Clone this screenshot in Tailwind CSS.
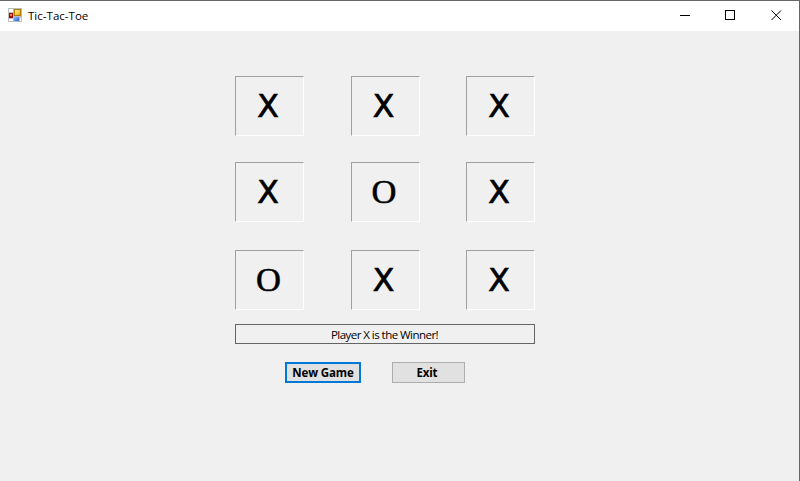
<!DOCTYPE html>
<html lang="en">
<head>
<meta charset="utf-8">
<title>Tic-Tac-Toe</title>
<script src="https://cdn.jsdelivr.net/npm/@tailwindcss/browser@4"></script>
</head>
<body class="w-[800px] h-[481px] overflow-hidden bg-[#f0f0f0] text-black font-['Open_Sans',sans-serif]">
<div class="flex flex-col w-[800px] h-[481px] border-t border-r border-[#66666a]">
  <header class="flex h-[30px] shrink-0 bg-white">
    <svg class="ml-2 mt-[7px] shrink-0" width="14" height="14" shape-rendering="crispEdges">
      <defs>
        <linearGradient id="y" x2="1" y2="1"><stop stop-color="#fff3a0"/><stop offset="1" stop-color="#e8a800"/></linearGradient>
        <linearGradient id="b" x2="1" y2="1"><stop stop-color="#8fbcff"/><stop offset="1" stop-color="#2b62d0"/></linearGradient>
      </defs>
      <rect width="14" height="14" fill="#bdbdbd"/>
      <path fill="#fff" d="M1 1h4v3H1zM1 11h4v2H1zM12 10h1v3h-1z"/>
      <rect x="1" y="5" width="4" height="5" fill="#a80c0c"/><rect x="2" y="6" width="2" height="2" fill="#e87860"/>
      <rect x="6" y="1" width="7" height="7" fill="#b07800"/><rect x="7" y="2" width="5" height="5" fill="url(#y)"/>
      <rect x="6" y="9" width="5" height="4" fill="url(#b)"/>
    </svg>
    <h1 class="ml-1.5 mt-[7px] text-[11.5px] leading-4 tracking-[0.02px] whitespace-nowrap">Tic-Tac-Toe</h1>
    <svg class="ml-auto mr-[17px] mt-[9px]" width="102" height="11" fill="none" stroke="#000">
      <path shape-rendering="crispEdges" d="M0 5.5h10M45.500 .5h9v9h-9z"/>
      <path d="M91.500 .5l9.500 9.500M101 .5l-9.500 9.500"/>
    </svg>
  </header>
  <main class="pl-[235px] pt-[45px]">
    <div class="grid w-[300px] grid-cols-[69px_69px_69px] grid-rows-[60px_60px_60px] gap-x-[46.500px] gap-y-[27px] text-[31.5px] leading-[32px] font-['DejaVu_Sans',sans-serif] [-webkit-text-stroke:0.7px_#000]">
      <div class="flex items-center justify-center pr-[3px] border border-t-[#a0a0a0] border-l-[#a0a0a0] border-r-white border-b-white">X</div>
      <div class="flex items-center justify-center pr-[3px] border border-t-[#a0a0a0] border-l-[#a0a0a0] border-r-white border-b-white">X</div>
      <div class="flex items-center justify-center pr-[3px] border border-t-[#a0a0a0] border-l-[#a0a0a0] border-r-white border-b-white">X</div>
      <div class="flex items-center justify-center pr-[3px] border border-t-[#a0a0a0] border-l-[#a0a0a0] border-r-white border-b-white -mt-px mb-px">X</div>
      <div class="flex items-center justify-center pr-[2px] pb-px border border-t-[#a0a0a0] border-l-[#a0a0a0] border-r-white border-b-white -mt-px mb-px font-['Liberation_Serif',serif] text-[34.5px] leading-none [-webkit-text-stroke:0.6px_#000]">O</div>
      <div class="flex items-center justify-center pr-[3px] border border-t-[#a0a0a0] border-l-[#a0a0a0] border-r-white border-b-white -mt-px mb-px">X</div>
      <div class="flex items-center justify-center pr-[2px] pb-px border border-t-[#a0a0a0] border-l-[#a0a0a0] border-r-white border-b-white font-['Liberation_Serif',serif] text-[34.5px] leading-none [-webkit-text-stroke:0.6px_#000]">O</div>
      <div class="flex items-center justify-center pr-[3px] border border-t-[#a0a0a0] border-l-[#a0a0a0] border-r-white border-b-white">X</div>
      <div class="flex items-center justify-center pr-[3px] border border-t-[#a0a0a0] border-l-[#a0a0a0] border-r-white border-b-white">X</div>
    </div>
    <div class="mt-[14px] flex h-5 w-[300px] items-center justify-center border border-[#646464] pt-px pr-px text-[11.5px] leading-none tracking-[-0.54px]">Player X is the Winner!</div>
    <div class="mt-[18px] ml-[50px] flex gap-[31px] text-[11.5px] font-bold leading-none">
      <button class="h-[21px] w-[76px] border-2 border-[#0078d7] bg-[#e1e1e1] tracking-[-0.1px] whitespace-nowrap">New Game</button>
      <button class="h-[21px] w-[73px] border border-[#adadad] bg-[#e1e1e1] pr-[3px] tracking-[-0.2px]">Exit</button>
    </div>
  </main>
</div>
</body>
</html>
